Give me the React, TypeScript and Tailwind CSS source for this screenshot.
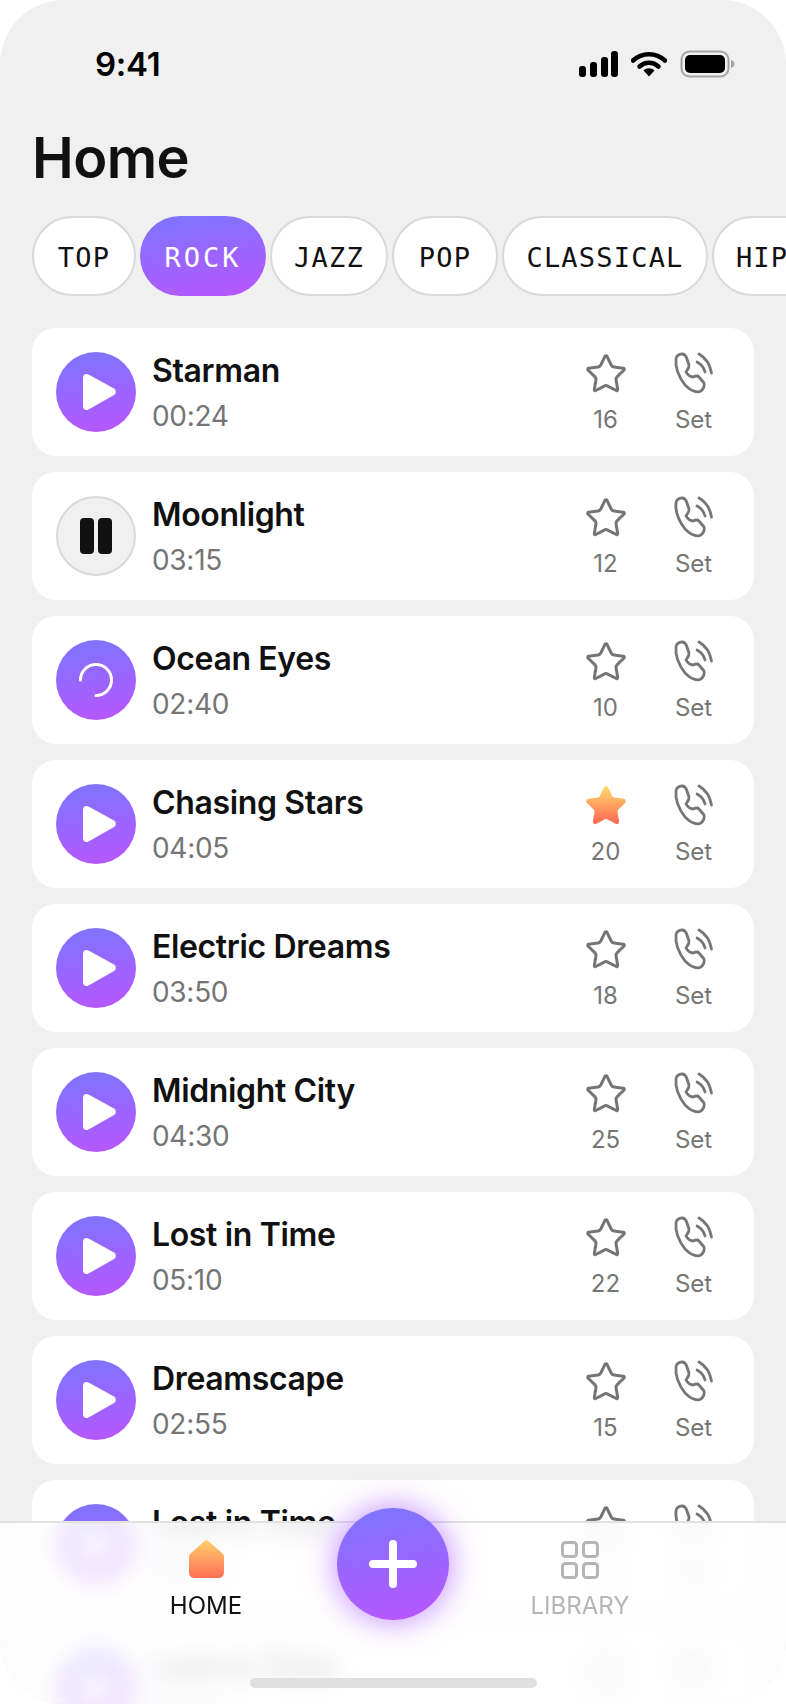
import { Star } from "lucide-react";

const songs = [
  { title: "Starman", time: "00:24", count: 16, state: "play" },
  { title: "Moonlight", time: "03:15", count: 12, state: "pause" },
  { title: "Ocean Eyes", time: "02:40", count: 10, state: "loading" },
  { title: "Chasing Stars", time: "04:05", count: 20, state: "play", starred: true },
  { title: "Electric Dreams", time: "03:50", count: 18, state: "play" },
  { title: "Midnight City", time: "04:30", count: 25, state: "play" },
  { title: "Lost in Time", time: "05:10", count: 22, state: "play" },
  { title: "Dreamscape", time: "02:55", count: 15, state: "play" },
  { title: "Lost in Time", time: "05:10", count: 22, state: "play" },
  { title: "Lost in Time", time: "05:10", count: 22, state: "play" },
];

const chips = [
  { label: "TOP", width: "w-[104px]" },
  { label: "ROCK", width: "w-[126px]", active: true },
  { label: "JAZZ", width: "w-[118px]" },
  { label: "POP", width: "w-[106px]" },
  { label: "CLASSICAL", width: "w-[206px]" },
  { label: "HIP-HOP", width: "w-[170px]" },
];

function StatusIcons() {
  return (
    <div className="flex items-center">
      <svg width="40" height="26" viewBox="0 0 40 26" fill="black">
        <rect x="0" y="15" width="7" height="11" rx="3" />
        <rect x="11" y="11" width="7" height="15" rx="3" />
        <rect x="22" y="6" width="7" height="20" rx="3" />
        <rect x="32" y="0" width="7" height="26" rx="3" />
      </svg>
      <svg className="ml-[12px]" width="36" height="26" viewBox="0 0 36 26" fill="none">
        <path d="M2 9.5C11 1 25 1 34 9.5" stroke="black" strokeWidth="4.5" strokeLinecap="round" />
        <path d="M8.5 15.5C14 10.5 22 10.5 27.5 15.5" stroke="black" strokeWidth="4.5" strokeLinecap="round" />
        <path d="M12.5 19.5C15.5 16.5 20.5 16.5 23.5 19.5L18 25.5Z" fill="black" />
      </svg>
      <svg className="ml-[13px]" width="55" height="28" viewBox="0 0 55 28" fill="none">
        <rect x="1.5" y="1.5" width="47" height="25" rx="8" stroke="#a3a3a3" strokeWidth="2" />
        <rect x="5" y="5" width="40" height="18" rx="5" fill="black" />
        <path d="M51 10C53.5 11 54.5 12.5 54.5 14C54.5 15.5 53.5 17 51 18Z" fill="#a3a3a3" />
      </svg>
    </div>
  );
}

function PlayButton({ state }: { state: string }) {
  if (state === "pause") {
    return (
      <div className="flex h-[80px] w-[80px] shrink-0 items-center justify-center gap-[4px] rounded-full border-2 border-[#d9d9d9] bg-[#f0f0f0]">
        <div className="h-[36px] w-[14px] rounded-[4px] bg-[#111111]" />
        <div className="h-[36px] w-[14px] rounded-[4px] bg-[#111111]" />
      </div>
    );
  }
  return (
    <div className="flex h-[80px] w-[80px] shrink-0 items-center justify-center rounded-full bg-[linear-gradient(170deg,#7b76ff,#b955ff)]">
      {state === "loading" ? (
        <svg width="36" height="36" viewBox="0 0 36 36" fill="none">
          <path d="M2.5 18A15.5 15.5 0 1 1 18 33.5" stroke="white" strokeWidth="3" strokeLinecap="round" />
        </svg>
      ) : (
        <svg className="ml-[5px]" width="36" height="38" viewBox="0 0 36 38" fill="white">
          <path d="M2 5C2 1.5 4.5 0 7.5 1.5L33 15.5C35.5 17 35.5 20.5 33 22L7.5 36.5C4.5 38 2 36.5 2 33Z" />
        </svg>
      )}
    </div>
  );
}

function PhoneIcon() {
  return (
    <svg className="ml-[1px]" width="48" height="48" viewBox="6 6 48 48" fill="none" stroke="#757575" strokeWidth="2.8" strokeLinecap="round" strokeLinejoin="round">
      <path d="M12 15C12 12 15 10 18 10C21 10 22 12 23 15L25 21C25.5 24 23 26 22 28C24 31 26 33 29 33C31 32 33 31 35 33L40 39C41 42 39 46 36 47.5C31 49 26 46 21 41C15 33 11 24 12 15Z" />
      <path d="M35 10C42 14 46 20 47.5 29" />
      <path d="M33 18C37 20 40 24 41 28" />
    </svg>
  );
}

function SongRow({ song }: { song: (typeof songs)[number] }) {
  return (
    <div className="flex h-[128px] shrink-0 items-center rounded-[24px] bg-white pl-[24px] pr-[17px]">
      <PlayButton state={song.state} />
      <div className="ml-[16px] flex flex-1 flex-col gap-[7px] pt-[1px]">
        <div className="text-[32px] leading-[40px] font-semibold tracking-[-0.36px] text-[#111111]">{song.title}</div>
        <div className="text-[28px] leading-[36px] tracking-[-0.3px] text-[#757575]">{song.time}</div>
      </div>
      <div className="mr-[1px] flex w-[87px] flex-col items-center gap-[6px] pt-[1px]">
        <div className="flex h-[48px] items-center pt-[1px]">
          {song.starred ? (
            <svg width="44" height="44" viewBox="0 0 24 24">
              <defs>
                <linearGradient id="starFill" x1="0" y1="0" x2="0" y2="1">
                  <stop offset="0" stopColor="#ffd76a" />
                  <stop offset="1" stopColor="#ff6a55" />
                </linearGradient>
              </defs>
              <path
                fill="url(#starFill)"
                stroke="url(#starFill)"
                strokeWidth="1.6"
                strokeLinejoin="round"
                d="M11.525 2.295a.53.53 0 0 1 .95 0l2.31 4.679a2.123 2.123 0 0 0 1.595 1.16l5.166.756a.53.53 0 0 1 .294.904l-3.736 3.638a2.123 2.123 0 0 0-.611 1.878l.882 5.14a.53.53 0 0 1-.771.56l-4.618-2.428a2.122 2.122 0 0 0-1.973 0L6.396 21.01a.53.53 0 0 1-.77-.56l.881-5.139a2.122 2.122 0 0 0-.611-1.879L2.16 9.795a.53.53 0 0 1 .294-.906l5.165-.755a2.122 2.122 0 0 0 1.597-1.16z"
              />
            </svg>
          ) : (
            <Star size={44} strokeWidth={1.64} color="#757575" />
          )}
        </div>
        <div className="text-[24px] leading-[32px] text-[#757575]">{song.count}</div>
      </div>
      <div className="flex w-[87px] flex-col items-center gap-[6px] pt-[1px]">
        <PhoneIcon />
        <div className="text-[24px] leading-[32px] text-[#757575]">Set</div>
      </div>
    </div>
  );
}

export default function App() {
  return (
    <div className="relative h-[1704px] w-[786px] overflow-hidden rounded-[64px] bg-[#f0f0f0] font-['Inter',sans-serif]">
      <div className="flex h-[124px] items-start justify-between pl-[95px] pr-[51px] pt-[40px]">
        <div className="text-[33px] leading-[48px] font-semibold tracking-[-0.3px] text-black">9:41</div>
        <div className="flex h-[48px] items-center">
          <StatusIcons />
        </div>
      </div>

      <h1 className="pl-[32px] text-[56px] leading-[68px] font-semibold tracking-[-0.56px] text-[#111111]">Home</h1>

      {/* Genre chips */}
      <div className="mt-[24px] flex gap-[4px] overflow-hidden pl-[32px] font-['DejaVu_Sans_Mono',monospace]">
        {chips.map((chip) =>
          chip.active ? (
            <div
              key={chip.label}
              className={`flex h-[80px] shrink-0 items-center justify-center rounded-full bg-[linear-gradient(170deg,#7b76ff,#b955ff)] pt-[4px] text-[27px] font-light tracking-[3px] text-white ${chip.width}`}
            >
              {chip.label}
            </div>
          ) : (
            <div
              key={chip.label}
              className={`flex h-[80px] shrink-0 items-center justify-center rounded-full border-2 border-[#d9d9d9] bg-white pt-[4px] text-[27px] font-light tracking-[1.2px] text-[#111111] ${chip.width}`}
            >
              {chip.label}
            </div>
          )
        )}
      </div>

      <div className="mt-[32px] flex flex-col gap-[16px] px-[32px]">
        {songs.map((song, i) => (
          <SongRow key={i} song={song} />
        ))}
      </div>

      {/* Bottom nav */}
      <div className="absolute bottom-0 left-0 h-[183px] w-full border-t-2 border-[#e2e2e2]">
        {/* frosted glass: blurred copy of the rows that pass under the bar */}
        <div className="absolute inset-0 overflow-hidden bg-[#f0f0f0]" aria-hidden="true">
          <div className="absolute left-0 top-[-43px] flex w-full flex-col gap-[16px] px-[32px] blur-[12px]">
            {songs.slice(8).map((song, i) => (
              <SongRow key={i} song={song} />
            ))}
          </div>
          <div className="absolute inset-0 bg-white/80" />
        </div>

        <div className="relative grid grid-cols-[187px_187px_187px] justify-center">
          <div className="flex flex-col items-center pt-[17px]">
            <svg width="35" height="38" viewBox="0 0 35 38">
              <defs>
                <linearGradient id="homeFill" x1="0" y1="0" x2="0" y2="1">
                  <stop offset="0" stopColor="#ffd06c" />
                  <stop offset="1" stopColor="#ff6f56" />
                </linearGradient>
              </defs>
              <path
                fill="url(#homeFill)"
                d="M15.8 0.8C16.8-0.2 18.2-0.2 19.2 0.8L33 13C34.3 14 35 15.3 35 17V32C35 35.5 33 38 29.5 38H5.5C2 38 0 35.5 0 32V17C0 15.3 0.7 14 2 13Z"
              />
            </svg>
            <div className="mt-[12px] text-[24px] leading-[32px] text-[#111111]">HOME</div>
          </div>
          <div className="flex justify-center">
            <div className="-mt-[15px] flex h-[112px] w-[112px] items-center justify-center rounded-full bg-[linear-gradient(170deg,#7b76ff,#b955ff)] shadow-[0_0_32px_rgba(170,90,255,0.75)]">
              <svg width="48" height="48" viewBox="0 0 48 48" stroke="white" strokeWidth="8" strokeLinecap="round">
                <path d="M24 4V44M4 24H44" />
              </svg>
            </div>
          </div>
          <div className="flex flex-col items-center pt-[18px]">
            <svg width="38" height="38" viewBox="0 0 38 38" fill="none" stroke="#b5b5b5" strokeWidth="3">
              <rect x="1.5" y="1.5" width="14" height="14" rx="3" />
              <rect x="22.5" y="1.5" width="14" height="14" rx="3" />
              <rect x="1.5" y="22.5" width="14" height="14" rx="3" />
              <rect x="22.5" y="22.5" width="14" height="14" rx="3" />
            </svg>
            <div className="mt-[11px] text-[24px] leading-[32px] text-[#b5b5b5]">LIBRARY</div>
          </div>
        </div>
        <div className="absolute bottom-[16px] left-[250px] h-[10px] w-[287px] rounded-full bg-[#e0e0e0]" />
      </div>
    </div>
  );
}
